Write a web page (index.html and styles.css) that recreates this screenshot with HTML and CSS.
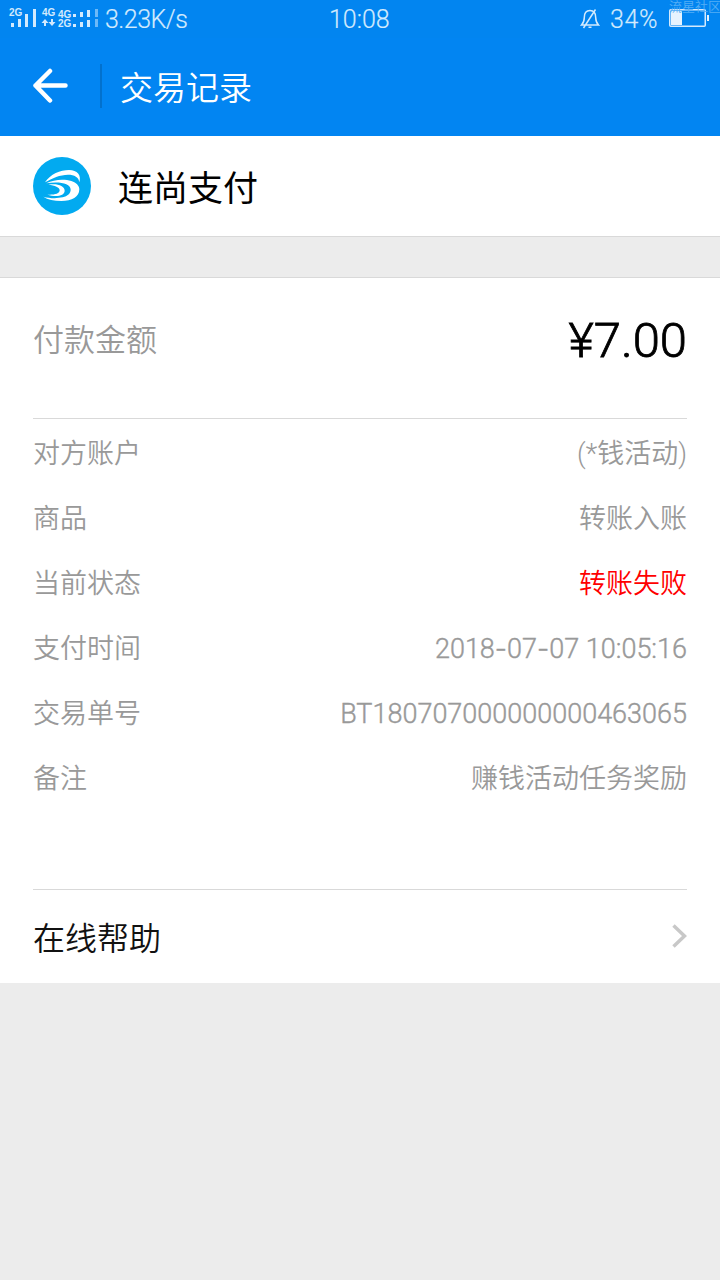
FILE: index.html
```html
<!DOCTYPE html>
<html lang="zh-CN">
<head>
    <meta charset="UTF-8">
    <title>交易记录</title>
    <link rel="stylesheet" href="styles.css">
</head>
<body>

    <div class="statusbar">
        <svg class="signal" width="100" height="38" viewBox="0 0 100 38">
            <g class="net">
                <text x="9" y="16">2G</text>
                <text x="42" y="16">4G</text>
                <text x="58" y="17.500">4G</text>
                <text x="58" y="27">2G</text>
            </g>
            <path d="M11 23h3v4h-3zM18 19h3v8h-3zM25 14h3v13h-3zM33 9h3v18h-3z"/>
            <path d="M45 19l3.500 4h-2.500v3h-2v-3h-2.500zM52 26l3.500-4h-2.500v-3h-2v3h-2.500z"/>
            <path d="M73 14h3v3h-3zM80 12h3v5h-3zM87 10h3v7h-3zM73 24h3v3h-3zM80 22h3v5h-3zM87 20h3v7h-3z"/>
            <path class="off" d="M95 9h3v8h-3zM95 19h3v8h-3z"/>
        </svg>
        <span class="speed">3.23K/s</span>
        <span class="clock">10:08</span>
        <svg class="bell" width="20" height="22" viewBox="0 0 20 22">
            <path d="M1.500 17h17c-2-2-2.800-4-2.800-7.500C15.700 5 13.500 2.500 10 2.500S4.300 5 4.300 9.500C4.300 13 3.500 15 1.500 17zM8.500 19.300h3M15.500 1.500L3.500 20"/>
        </svg>
        <span class="percent">34%</span>
        <svg class="battery" width="40" height="20" viewBox="0 0 40 20">
            <rect x=".75" y=".75" width="35.500" height="16.500" rx="1"/>
            <path d="M2 2h11v14H2zM38 6h2v6h-2z"/>
        </svg>
        <span class="watermark">流星社区</span>
    </div>

    <div class="header">
        <svg class="back" width="36" height="36" viewBox="0 0 36 36">
            <path d="M18 3L3.500 17.500L18 32.500M3.500 17.500h30"/>
        </svg>
        <h1><span>交易记录</span></h1>
    </div>

    <div class="merchant">
        <svg class="logo" width="58" height="58" viewBox="0 0 174 174">
            <circle cx="87" cy="87" r="87"/>
            <path d="M36 76C52 51 82 39 108 39c25 0 38 16 31 37-1-15-15-23-34-23-24 0-47 11-69 23z"/>
            <path d="M40 79c22-12 54-14 75-7 16 5 24 15 24 25 0 23-22 35-54 35-22 0-41-4-54-13 18 5 40 6 58 2 15-4 24-12 24-23 0-20-36-25-73-19z"/>
            <path d="M46 83c26-5 49 3 49 18 0 16-26 20-52 12 20 1 37-2 37-13 0-9-14-15-34-17z"/>
        </svg>
        <span>连尚支付</span>
    </div>

    <div class="card">
        <div class="amount">
            <span class="label">付款金额</span>
            <span class="money">¥7.00</span>
        </div>

        <div class="details">
            <div class="row"><span>对方账户</span><span>(*钱活动)</span></div>
            <div class="row"><span>商品</span><span>转账入账</span></div>
            <div class="row"><span>当前状态</span><span class="failed">转账失败</span></div>
            <div class="row"><span>支付时间</span><span class="num">2018<i>-</i>07<i>-</i>07 10:05:16</span></div>
            <div class="row"><span>交易单号</span><span class="num">BT180707000000000463065</span></div>
            <div class="row"><span>备注</span><span>赚钱活动任务奖励</span></div>
        </div>

        <div class="help">
            <span>在线帮助</span>
            <svg width="16" height="24" viewBox="0 0 16 24">
                <path d="M2.500 1.500L13.500 12L2.500 22.500"/>
            </svg>
        </div>
    </div>

</body>
</html>
```

FILE: styles.css
```css
* {
    box-sizing: border-box;
}

body {
    margin: 0;
    height: 1280px;
    overflow: hidden;
    background-color: #ececec;
    font-family: Roboto, "Noto Sans CJK SC", sans-serif;
    font-weight: 350;
    color: #000;
}

svg {
    display: block;
    flex-shrink: 0;
}

.statusbar {
    position: relative;
    display: flex;
    height: 38px;
    background-color: #0285f0;
    color: #d3eafd;
    font-size: 25px;
    line-height: 39px;
    white-space: nowrap;
}

.signal {
    fill: #d3eafd;
}

.signal .off {
    fill: #6db9f8;
}

.net {
    font: bold 10px "Liberation Sans", sans-serif;
}

.speed,
.clock,
.percent {
    -webkit-text-stroke: 0.2px #d3eafd;
}

.speed {
    width: 224px;
    padding-left: 5px;
    letter-spacing: -0.5px;
}

.clock {
    width: 256px;
    padding-left: 5px;
}

.bell {
    margin-top: 8px;
    fill: none;
    stroke: #d3eafd;
    stroke-width: 1.5;
}

.percent {
    width: 69px;
    padding-left: 10px;
    letter-spacing: 0.6px;
}

.battery {
    margin-top: 9px;
    fill: #e6f3fe;
}

.battery rect {
    fill: none;
    stroke: #d3eafd;
    stroke-width: 1.5;
}

.watermark {
    position: absolute;
    top: 0;
    left: 669px;
    font-size: 13px;
    line-height: 13px;
    color: #55aef5;
}

.header {
    display: flex;
    align-items: center;
    height: 98px;
    padding-left: 32px;
    background-color: #0285f2;
}

.back {
    margin-bottom: 2px;
    fill: none;
    stroke: #fff;
    stroke-width: 4.5;
    stroke-linecap: round;
    stroke-linejoin: round;
}

.header h1 {
    height: 44px;
    margin: 0 0 3px 32px;
    padding-left: 18px;
    border-left: 2px solid #0271cd;
    font-size: 33px;
    font-weight: 350;
    line-height: 50px;
    color: #fff;
}

.merchant {
    display: flex;
    align-items: center;
    height: 101px;
    padding-left: 33px;
    background-color: #fff;
    border-bottom: 1px solid #d9d9d9;
    font-size: 35px;
    font-weight: 400;
}

.merchant span {
    margin-left: 27px;
    padding-bottom: 2px;
}

.logo {
    fill: #fff;
}

.logo circle {
    fill: #02aaf0;
}

.card {
    height: 706px;
    margin-top: 40px;
    padding: 0 33px;
    background-color: #fff;
    border-top: 1px solid #d9d9d9;
}

.amount {
    display: flex;
    justify-content: space-between;
    height: 141px;
    border-bottom: 1px solid #d9d9d9;
    line-height: 126px;
}

.label {
    font-size: 31px;
    color: #999;
}

.money {
    font-size: 49px;
    -webkit-text-stroke: 0.8px #000;
}

.details {
    height: 471px;
    padding-top: 3px;
    border-bottom: 1px solid #d9d9d9;
}

.row {
    display: flex;
    justify-content: space-between;
    height: 65px;
    font-size: 27px;
    line-height: 65px;
    color: #999;
}

.row .num {
    -webkit-text-stroke: 0.4px #999;
}

/* wider dashes in the date */
.row i {
    font-family: Inter, sans-serif;
    font-style: normal;
    line-height: 1;
}

.row .failed {
    color: #f00;
}

.help {
    display: flex;
    justify-content: space-between;
    align-items: center;
    height: 92px;
    font-size: 32px;
    color: #111;
}

.help svg {
    fill: none;
    stroke: #c8c8c8;
    stroke-width: 3.5;
}
```
